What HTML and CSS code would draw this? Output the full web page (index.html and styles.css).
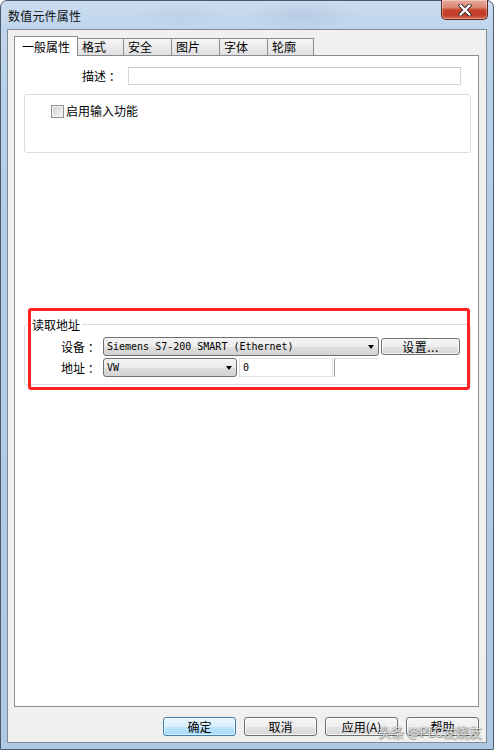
FILE: index.html
```html
<!DOCTYPE html>
<html lang="zh-CN">
<head>
<meta charset="utf-8">
<title>数值元件属性</title>
<link rel="stylesheet" href="styles.css">
</head>
<body>
<div class="window">
  <div class="titlebar">
    <span class="title">数值元件属性</span>
    <div class="close" aria-label="关闭">
      <svg width="14" height="12" viewBox="0 0 14 12">
        <path d="M2.5 1.5 L11.5 10.5 M11.5 1.5 L2.5 10.5" stroke="#3a2a2a" stroke-width="4.2" stroke-linecap="round"/>
        <path d="M2.5 1.5 L11.5 10.5 M11.5 1.5 L2.5 10.5" stroke="#ffffff" stroke-width="2.4" stroke-linecap="round"/>
      </svg>
    </div>
  </div>
  <div class="client">
    <div class="tabs">
      <div class="tab active">一般属性</div>
      <div class="tab w46">格式</div>
      <div class="tab w48">安全</div>
      <div class="tab w48">图片</div>
      <div class="tab w48">字体</div>
      <div class="tab w46">轮廓</div>
    </div>
    <div class="panel">
      <div class="desc-row">
        <span class="desc-label">描述 ：</span>
        <div class="textbox desc-input"></div>
      </div>
      <div class="group group-input">
        <div class="check"><span class="checkbox"></span><span>启用输入功能</span></div>
      </div>
      <fieldset class="address">
        <legend>读取地址</legend>
        <div class="field-row">
          <span class="field-label">设备 ：</span>
          <div class="combo combo-device"><span class="combo-text">Siemens S7-200 SMART (Ethernet)</span><span class="arrow"></span></div>
          <div class="btn btn-setup">设置...</div>
        </div>
        <div class="field-row second">
          <span class="field-label">地址 ：</span>
          <div class="combo combo-type"><span class="combo-text">VW</span><span class="arrow"></span></div>
          <div class="textbox addr-input">0</div>
          <div class="partial"></div>
        </div>
      </fieldset>
      <div class="highlight"></div>
    </div>
    <div class="buttons">
      <div class="btn default">确定</div>
      <div class="btn">取消</div>
      <div class="btn">应用(A)</div>
      <div class="btn">帮助</div>
    </div>
  </div>
  <div class="watermark">头条 @PLC发烧友</div>
</div>
</body>
</html>
```
FILE: styles.css
```css
* { box-sizing: border-box; }
html, body { margin: 0; padding: 0; }
body {
  width: 494px;
  height: 750px;
  overflow: hidden;
  background: #ffffff;
  font-family: "Noto Sans CJK SC", "Noto Sans", sans-serif;
  font-size: 12px;
  color: #000;
}
.window {
  position: relative;
  width: 494px;
  height: 750px;
  border: 1px solid #4a5868;
  border-radius: 7px 7px 0 0;
  background:
    radial-gradient(ellipse 60px 14px at 300px 14px, rgba(160,180,205,0.35), transparent),
    radial-gradient(ellipse 50px 12px at 180px 14px, rgba(170,190,210,0.3), transparent),
    linear-gradient(180deg, #cadcf0 0, #bfd5ed 28px, #b7cee8 120px, #aec7e3 100%);
  padding: 0 6px 6px 6px;
  display: flex;
  flex-direction: column;
}
.titlebar {
  height: 28px;
  display: flex;
  align-items: flex-start;
}
.title {
  margin-top: 7px;
  padding-left: 1px;
  line-height: 16px;
  font-size: 12px;
  letter-spacing: 0.2px;
  color: #111;
}
.close {
  margin-left: auto;
  margin-top: -1px;
  margin-right: -1px;
  width: 47px;
  height: 20px;
  border: 1px solid #5a2a22;
  border-top: none;
  border-radius: 0 0 5px 5px;
  background: linear-gradient(180deg, #e9ab9c 0, #dc8474 40%, #c8432d 52%, #c23d27 78%, #d8694b 100%);
  box-shadow: inset 0 0 0 1px rgba(255,255,255,0.35);
  display: flex;
  align-items: center;
  justify-content: center;
}
.client {
  flex: 1;
  border: 1px solid #7f8b99;
  background: #f0f0f0;
  padding: 6px 7px 6px 6px;
  display: flex;
  flex-direction: column;
}
.tabs {
  height: 19px;
  display: flex;
  align-items: flex-end;
}
.tab {
  height: 17px;
  border: 1px solid #898c95;
  border-left: none;
  border-bottom: none;
  background: linear-gradient(180deg, #f5f5f5 0, #ebebeb 50%, #e0e0e0 100%);
  padding-left: 4px;
  line-height: 15px;
  white-space: nowrap;
}
.tab.active {
  width: 64px;
  height: 20px;
  border-left: 1px solid #898c95;
  margin-bottom: -1px;
  background: #ffffff;
  padding-left: 7px;
  padding-top: 2px;
  position: relative;
  z-index: 1;
}
.tab.w46 { width: 46px; }
.tab.w48 { width: 48px; }
.panel {
  flex: 1;
  position: relative;
  border: 1px solid #898c95;
  background: #ffffff;
  display: flex;
  flex-direction: column;
}
.desc-row {
  margin-top: 11px;
  display: flex;
  align-items: center;
  height: 18px;
}
.desc-label {
  margin-left: 67px;
  width: 46px;
  line-height: 16px;
}
.textbox {
  border: 1px solid #d3d7dc;
  border-top-color: #c2c7ce;
  background: #fff;
}
.desc-input {
  width: 333px;
  height: 18px;
}
.group {
  border: 1px solid #d5dfe5;
  border-radius: 3px;
}
.group-input {
  margin: 9px 7px 0 9px;
  height: 59px;
  padding: 9px 0 0 26px;
}
.check {
  display: flex;
  align-items: center;
  gap: 2px;
  line-height: 14px;
}
.checkbox {
  width: 13px;
  height: 13px;
  border: 1px solid #8e8f8f;
  background: linear-gradient(135deg, #cfcfcf 0, #e8e8e8 60%, #f7f7f7 100%);
  box-shadow: inset 0 0 0 1px #f4f4f4;
}
.address {
  margin: 164px 7px 0 9px;
  padding: 5px 6px 7px 5px;
  border: 1px solid #d5dfe5;
  border-radius: 3px;
  min-width: 0;
}
.address legend {
  padding: 0 2px;
  line-height: 15px;
  font-size: 12px;
}
.field-row {
  display: flex;
  align-items: center;
  height: 19px;
}
.field-row.second { margin-top: 2px; }
.field-label {
  margin-left: 31px;
  width: 42px;
  flex: none;
  line-height: 15px;
}
.combo {
  height: 19px;
  border: 1px solid #707070;
  border-radius: 3px;
  background: linear-gradient(180deg, #f4f4f4 0, #ececec 50%, #dfdfdf 51%, #d3d3d3 100%);
  display: flex;
  align-items: center;
  padding-left: 3px;
  flex: none;
}
.combo-text {
  font-family: "DejaVu Sans Mono", "Liberation Mono", monospace;
  font-size: 10px;
  line-height: 15px;
  white-space: nowrap;
}
.arrow {
  margin-left: auto;
  margin-right: 4px;
  width: 0;
  height: 0;
  border-left: 3.5px solid transparent;
  border-right: 3.5px solid transparent;
  border-top: 4px solid #000;
}
.combo-device { width: 276px; }
.combo-type { width: 134px; }
.btn {
  width: 73px;
  height: 19px;
  border: 1px solid #707070;
  border-radius: 3px;
  background: linear-gradient(180deg, #f6f6f6 0, #eeeeee 50%, #e2e2e2 51%, #d8d8d8 100%);
  box-shadow: inset 0 0 0 1px rgba(255,255,255,0.7);
  display: flex;
  align-items: center;
  justify-content: center;
  line-height: 15px;
  flex: none;
}
.btn-setup {
  margin-left: 2px;
  width: 79px;
  height: 17px;
  letter-spacing: 0.5px;
}
.addr-input {
  margin-left: 2px;
  width: 94px;
  height: 19px;
  padding-left: 3px;
  font-family: "DejaVu Sans Mono", monospace;
  font-size: 10px;
  line-height: 17px;
  border-color: #e2e3ea;
}
.partial {
  margin-left: 1px;
  width: 44px;
  height: 19px;
  border-left: 1px solid #9a9a9a;
  border-top: 1px solid #dcdcdc;
}
.highlight {
  position: absolute;
  left: 13px;
  top: 252px;
  width: 442px;
  height: 82px;
  border: 3px solid #ff2222;
  border-radius: 3px;
  pointer-events: none;
}
.buttons {
  margin-top: 10px;
  display: flex;
  justify-content: flex-end;
  gap: 8px;
}
.btn.default {
  border-color: #3c7fb1;
  background: linear-gradient(180deg, #eaf6fd 0, #d9f0fc 50%, #bee6fd 51%, #a7d9f5 100%);
  box-shadow: inset 0 0 0 1px rgba(255,255,255,0.6);
}
.watermark {
  position: absolute;
  left: 377px;
  top: 722px;
  font-size: 13px;
  line-height: 18px;
  color: rgba(255,255,255,0.8);
  text-shadow: 0 0 1px #555, 1px 1px 1px rgba(0,0,0,0.35);
  white-space: nowrap;
}
```
